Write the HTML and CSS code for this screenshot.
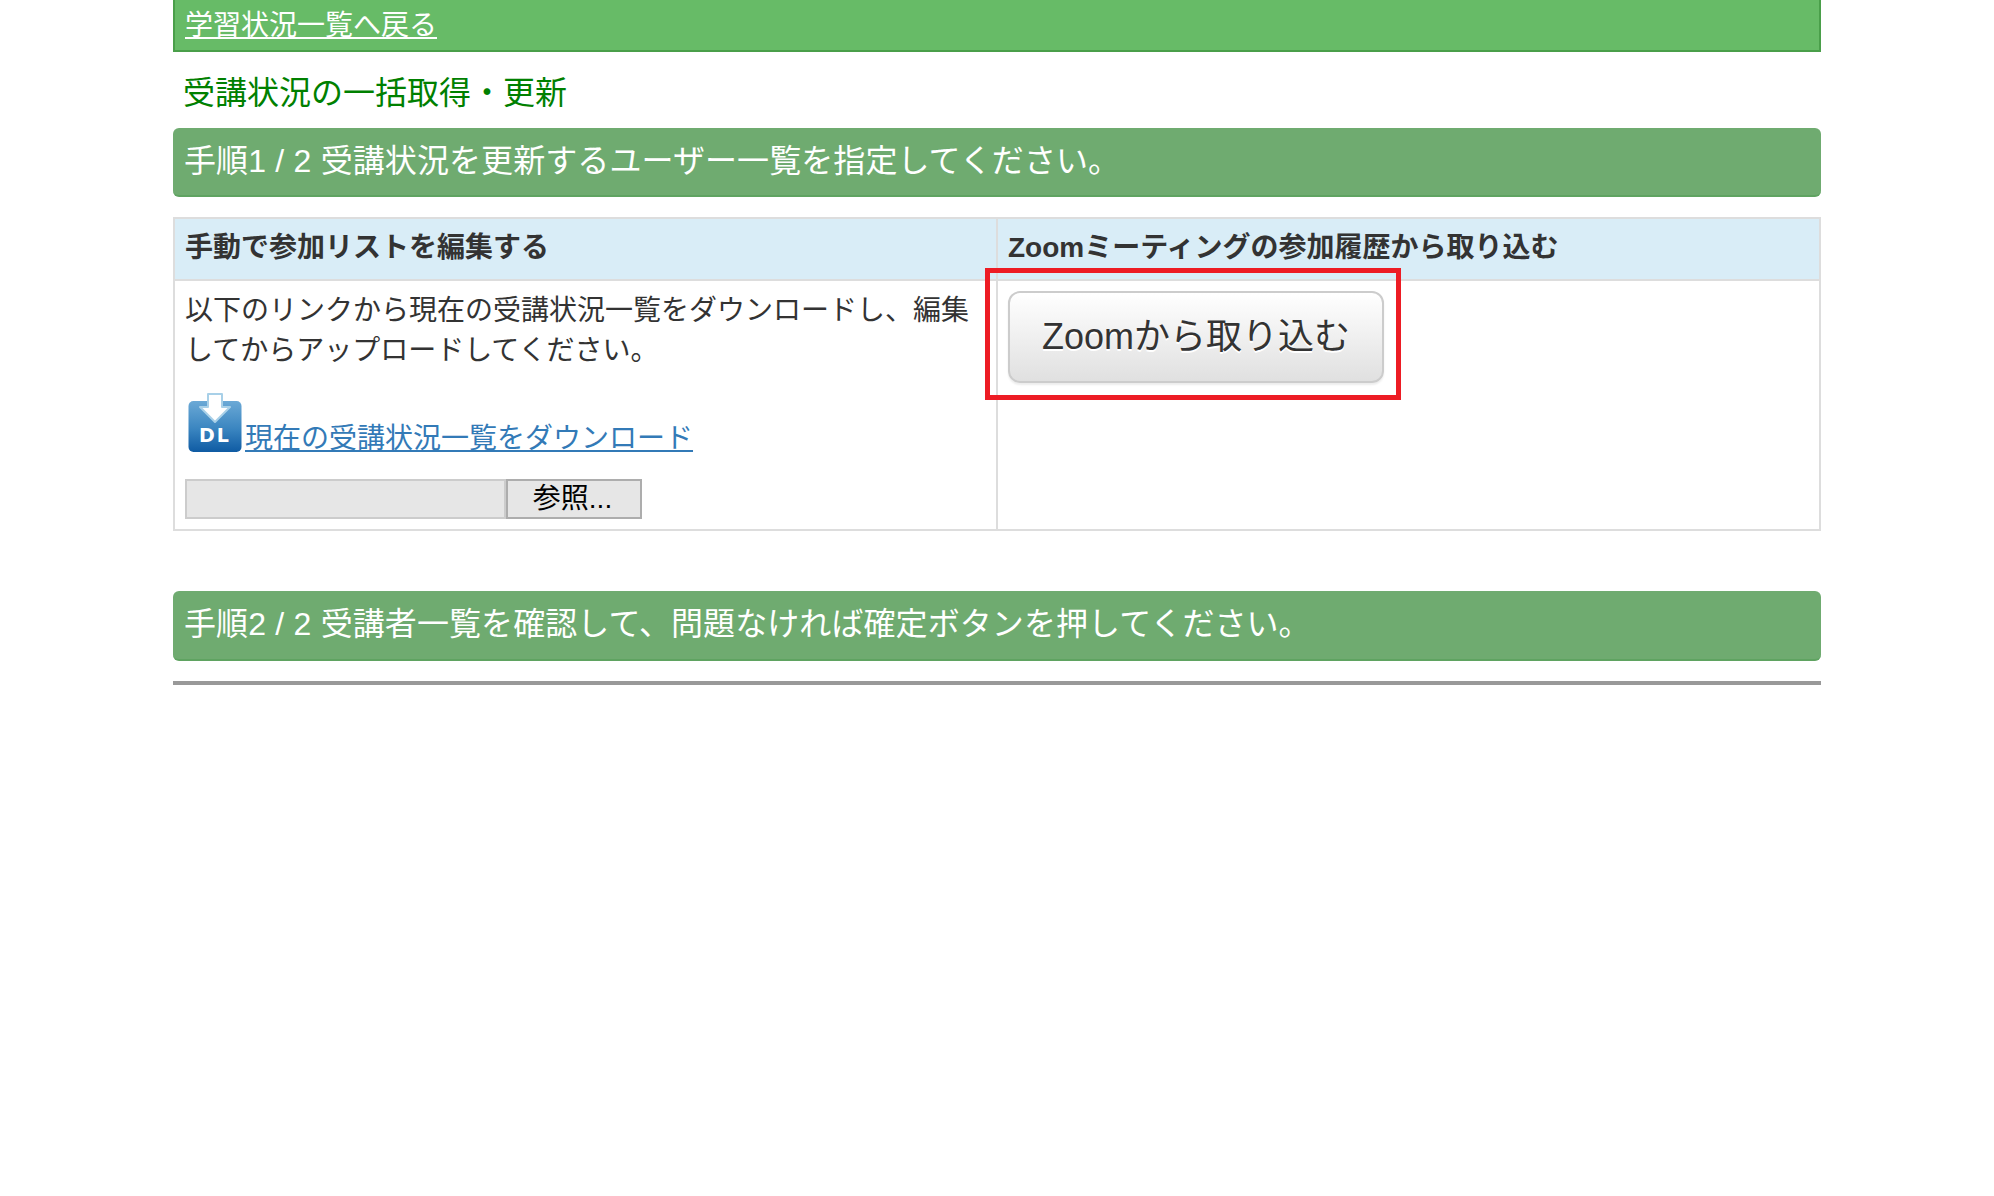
FILE: index.html
```html
<!DOCTYPE html>
<html lang="ja">
<head>
  <meta charset="UTF-8">
  <title>受講状況の一括取得・更新</title>
  <link rel="stylesheet" href="styles.css">
</head>
<body>
  <div class="container">
    <div class="back-bar"><a href="#">学習状況一覧へ戻る</a></div>
    <h1 class="page-title">受講状況の一括取得・更新</h1>

    <h2 class="step-bar">手順1 / 2 受講状況を更新するユーザー一覧を指定してください。</h2>
    <table class="import-table">
      <tr>
        <th>手動で参加リストを編集する</th>
        <th>Zoomミーティングの参加履歴から取り込む</th>
      </tr>
      <tr>
        <td>
          <p class="note">以下のリンクから現在の受講状況一覧をダウンロードし、編集してからアップロードしてください。</p>
          <p class="download">
            <svg class="dl-icon" viewBox="0 0 54 60" width="54" height="60">
              <defs>
                <linearGradient id="dlGrad" x1="0" y1="0" x2="0" y2="1">
                  <stop offset="0" stop-color="#6ba9d6"/>
                  <stop offset="0.55" stop-color="#3a85c0"/>
                  <stop offset="1" stop-color="#0f5ba3"/>
                </linearGradient>
              </defs>
              <rect x="0.5" y="9" width="53" height="51" rx="5" fill="url(#dlGrad)"/>
              <path d="M20 2h14v13h8L27 30 12 15h8z" fill="#fff" stroke="#a8d0e8" stroke-width="2" stroke-linejoin="round"/>
              <text class="dl-text" x="27" y="50" text-anchor="middle">DL</text>
            </svg><a href="#">現在の受講状況一覧をダウンロード</a>
          </p>
          <div class="file-row">
            <input class="file-name" type="text" disabled>
            <button class="file-btn" type="button">参照...</button>
          </div>
        </td>
        <td>
          <div class="zoom-wrap">
            <button class="zoom-btn" type="button">Zoomから取り込む</button>
            <div class="red-mark"></div>
          </div>
        </td>
      </tr>
    </table>

    <h2 class="step-bar step-two">手順2 / 2 受講者一覧を確認して、問題なければ確定ボタンを押してください。</h2>
    <hr class="end-line">
  </div>
</body>
</html>
```

FILE: styles.css
```css
* { box-sizing: border-box; }
body {
  margin: 0;
  font-family: "Liberation Sans", "Noto Sans CJK JP", sans-serif;
  font-size: 28px;
  line-height: 40px;
  color: #333;
  background: #fff;
}
.container {
  width: 1648px;
  margin: 0 auto;
}
.back-bar {
  height: 52px;
  padding: 6px 10px 0;
  background: #67bb67;
  border: 2px solid #4a9f4a;
  border-top: none;
}
.back-bar a {
  color: #fff;
  text-decoration: underline;
}
.page-title {
  margin: 18px 0 12px;
  padding: 0 10px;
  font-size: 32px;
  line-height: 46px;
  font-weight: normal;
  color: #008000;
}
.step-bar {
  margin: 0;
  height: 69px;
  padding: 10px 11px 0;
  font-size: 32px;
  line-height: 46px;
  font-weight: normal;
  word-spacing: .3px;
  letter-spacing: .08px;
  color: #fff;
  background: #6fab70;
  border-bottom: 2px solid #5fa361;
  border-radius: 6px;
}
.step-two {
  height: 70px;
  margin-top: 60px;
  padding-top: 10px;
}
.import-table {
  width: 100%;
  margin-top: 20px;
  border-collapse: collapse;
  table-layout: fixed;
}
.import-table th,
.import-table td {
  border: 2px solid #ddd;
  padding: 8px 10px;
  text-align: left;
  vertical-align: top;
}
.import-table th {
  height: 62px;
  padding-top: 9px;
  background: #d9edf7;
}
.import-table td {
  padding-top: 10px;
}
.note {
  margin: 0 0 20px;
}
.download {
  margin: 0 0 24px;
  padding-top: 1px;
  height: 64px;
}
.download a {
  color: #337ab7;
  text-decoration: underline;
}
.dl-icon {
  vertical-align: -4px;
  margin: 0 3px 0 3px;
}
.dl-text {
  font-family: "DejaVu Sans", sans-serif;
  font-size: 19px;
  font-weight: bold;
  letter-spacing: 2px;
  fill: #fff;
}
.file-row {
  display: flex;
  height: 40px;
  margin-bottom: 2px;
}
.file-name {
  width: 321px;
  height: 40px;
  background: #e6e6e6;
  border: 2px solid #ccc;
}
.file-btn {
  width: 136px;
  height: 40px;
  padding: 0 3px 0 0;
  font-family: inherit;
  font-size: 28px;
  line-height: 34px;
  color: #000;
  background: #e6e6e6;
  border: 2px solid #adadad;
}
.zoom-wrap {
  position: relative;
  width: 376px;
}
.zoom-btn {
  display: block;
  width: 376px;
  height: 92px;
  padding: 0 0 8px;
  font-family: inherit;
  font-size: 36px;
  color: #333;
  text-shadow: 0 2px 0 #fff;
  background: linear-gradient(to bottom, #fff 0%, #e0e0e0 100%);
  border: 2px solid #ccc;
  border-radius: 12px;
  box-shadow: inset 0 2px 0 rgba(255,255,255,.15), 0 2px 2px rgba(0,0,0,.075);
}
/* annotation drawn over the table */
.red-mark {
  position: absolute;
  top: -23px;
  left: -23px;
  right: -17px;
  bottom: -17px;
  border: 5px solid #ed1c24;
}
.end-line {
  margin: 20px 0 0;
  height: 4px;
  border: none;
  background: #999;
}
```
